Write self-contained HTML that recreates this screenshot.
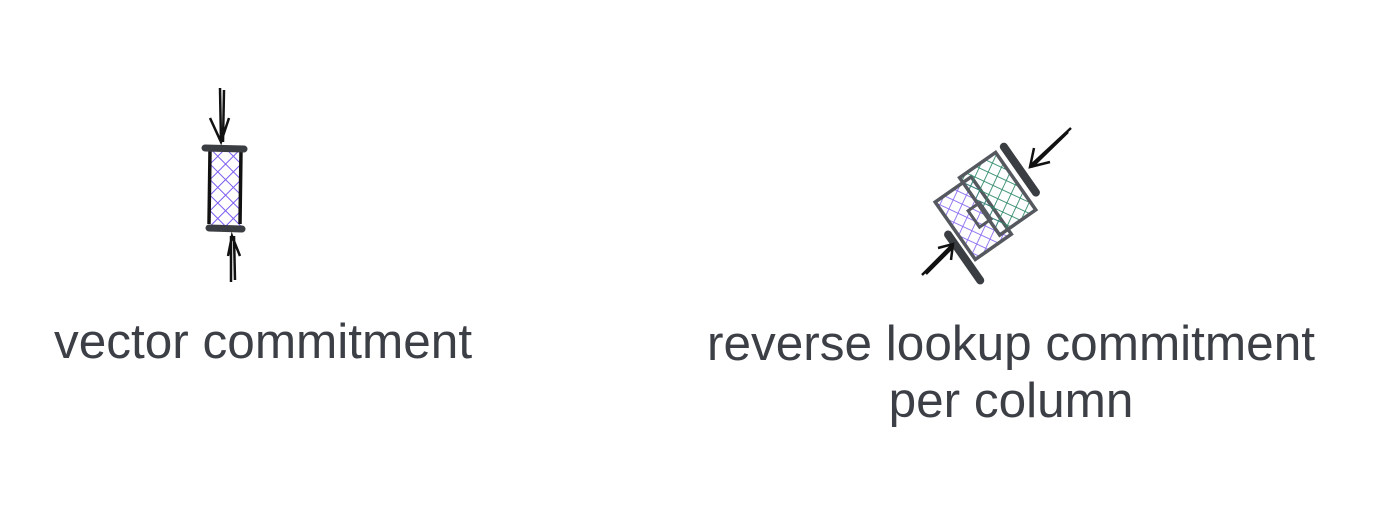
<!DOCTYPE html>
<html><head><meta charset="utf-8"><style>
html,body{margin:0;padding:0;background:#fff;width:1388px;height:523px;overflow:hidden;position:relative}
.t{position:absolute;font-family:"Liberation Sans",sans-serif;font-size:49.5px;color:#3c3f45;white-space:nowrap;line-height:57px}
</style></head><body>
<svg width="1388" height="523" style="position:absolute;left:0;top:0">
<defs>
<pattern id="hp" width="11" height="11" patternUnits="userSpaceOnUse" patternTransform="rotate(45)">
<path d="M0 0H11M0 0V11" stroke="#7b5cf0" stroke-width="2"/></pattern>
<pattern id="gp" width="10" height="10" patternUnits="userSpaceOnUse" patternTransform="rotate(-30)">
<path d="M0 0H10M0 0V10" stroke="#2f8a6a" stroke-width="1.8"/></pattern>
<pattern id="pp" width="10" height="10" patternUnits="userSpaceOnUse" patternTransform="rotate(-30)">
<path d="M0 0H10M0 0V10" stroke="#8a6af0" stroke-width="1.8"/></pattern>
</defs>
<rect x="209" y="150" width="32" height="76" fill="url(#hp)"/>
<path d="M210 150 L209 224 M241 150 L240 224" stroke="#111" stroke-width="3.5" fill="none"/>
<path d="M205 148 L244 149" stroke="#3a3d42" stroke-width="7" stroke-linecap="round"/>
<path d="M209 228 L242 229" stroke="#3a3d42" stroke-width="7" stroke-linecap="round"/>
<path d="M220 88 L221 142 M224 90 L223 142 M210 118 L221 142 L229 118" stroke="#111" stroke-width="2.5" fill="none"/>
<path d="M231 282 L231 236 M235 280 L234 236 M228 256 L232 236 L240 256" stroke="#111" stroke-width="2.5" fill="none"/>
<g transform="translate(993,208) rotate(-35)">
<rect x="-44" y="-38" width="44" height="70" fill="url(#pp)" stroke="#55585e" stroke-width="3.5"/>
<rect x="-10" y="-44" width="44" height="70" fill="url(#gp)" stroke="#55585e" stroke-width="3.5"/>
<rect x="-22" y="-12" width="14" height="20" fill="none" stroke="#55585e" stroke-width="3"/>
<path d="M44 -44 L44 12" stroke="#3a3d42" stroke-width="8" stroke-linecap="round"/>
<path d="M-52 -4 L-52 52" stroke="#3a3d42" stroke-width="8" stroke-linecap="round"/>
</g>
<path d="M1071 128 L1030 166 M1068 132 L1032 167 M1034 148 L1030 167 L1050 162" stroke="#111" stroke-width="2.5" fill="none"/>
<path d="M922 275 L953 244 M926 274 L953 247 M938 248 L953 244 L951 260" stroke="#111" stroke-width="2.5" fill="none"/>
</svg>
<div class="t" style="left:54px;top:313px">vector commitment</div>
<div class="t" style="left:650px;top:315px;width:722px;text-align:center">reverse lookup commitment<br>per column</div>
</body></html>
